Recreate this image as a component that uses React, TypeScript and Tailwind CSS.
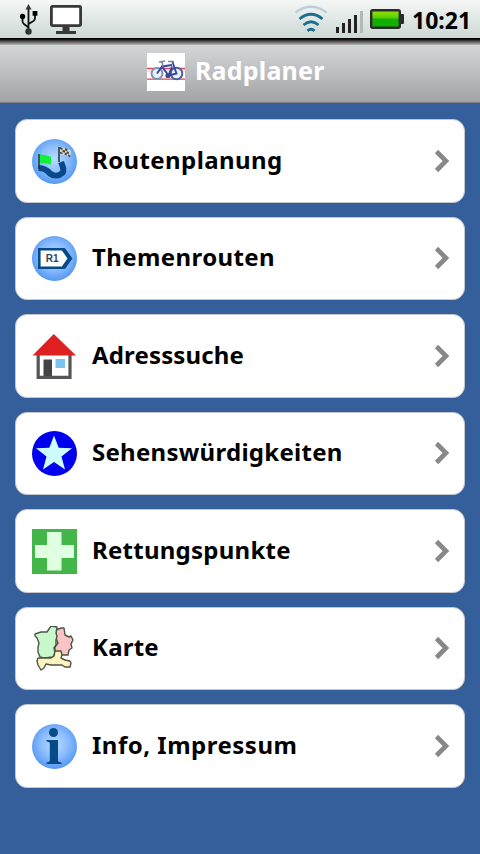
import React from "react";
import clsx from "clsx";

function UsbIcon() {
  return (
    <svg className="h-8 w-[18px]" viewBox="0 0 18 32" fill="none" stroke="#111" strokeWidth="1.800">
      <path d="M8.500 5v22M8.500 23.500L4 20Q2.500 19 2.500 17v-4M8.500 20l5-3Q15 16 15 14v-3" />
      <path d="M8.500 0L11.500 5.500h-6z" fill="#333" stroke="none" />
      <circle cx="2.500" cy="12.500" r="2.700" fill="#000" stroke="none" />
      <path d="M12.600 7h4.800v4.800h-4.800z" fill="#000" stroke="none" />
      <circle cx="8.500" cy="27.500" r="3.200" fill="#333" stroke="none" />
    </svg>
  );
}

function MonitorIcon() {
  return (
    <svg className="h-[30px] w-8" viewBox="0 0 32 30">
      <rect x="1.400" y="2.400" width="29.200" height="19.200" rx="1" fill="#fff" stroke="#383838" strokeWidth="2.800" />
      <path d="M12.500 22h7v5H26v3H6v-3h6.500z" fill="#383838" />
    </svg>
  );
}

function WifiIcon() {
  return (
    <svg className="h-[28px] w-[34px]" viewBox="0 0 34 28" fill="none" strokeWidth="2.700">
      <path d="M0.500 7.500Q16-4 31.500 7.500" stroke="#b9d0da" strokeWidth="2.400" />
      <path d="M4.500 14Q16 4.500 27.500 14" stroke="#1b6f91" />
      <path d="M8.500 20Q16 13.500 23.500 20" stroke="#1b6f91" />
      <path d="M12.500 25.800Q16 22.800 19.500 25.800" stroke="#1b6f91" strokeWidth="3" />
    </svg>
  );
}

function SignalIcon() {
  return (
    <svg className="h-[22px] w-[27px]" viewBox="0 0 27 22" fill="#222">
      <rect x="0" y="16" width="3" height="6" />
      <rect x="6" y="12" width="3" height="10" />
      <rect x="12" y="8" width="3" height="14" />
      <rect x="18" y="4" width="3" height="18" />
      <rect x="24" y="0" width="3" height="22" fill="#b4b9b8" />
    </svg>
  );
}

function BatteryIcon() {
  return (
    <svg className="h-5 w-[34px]" viewBox="0 0 34 20">
      <defs>
        <linearGradient id="charge" x1="0" y1="0" x2="0" y2="1">
          <stop offset="0" stopColor="#9be600" />
          <stop offset="0.450" stopColor="#55cc00" />
          <stop offset="0.500" stopColor="#0fb000" />
          <stop offset="1" stopColor="#10b400" />
        </linearGradient>
      </defs>
      <rect x="29" y="5" width="5" height="10" rx="1" fill="#2b2b2b" />
      <rect x="1.200" y="1.200" width="28.600" height="17.600" rx="1.500" fill="url(#charge)" stroke="#2b2b2b" strokeWidth="2.400" />
    </svg>
  );
}

function BikeLogo() {
  return (
    <svg className="h-[38px] w-[38px] bg-white" viewBox="0 0 38 38" fill="none">
      <path d="M0 15.500h38M0 26.200h38" stroke="#e2455a" strokeWidth="1.300" />
      <path d="M0 18h38" stroke="#f3b6c0" strokeWidth="0.800" />
      <circle cx="10" cy="20.500" r="5.500" fill="#e8f1f4" stroke="#8290b4" strokeWidth="2" />
      <circle cx="29.500" cy="20.500" r="5.800" fill="#e8f1f4" stroke="#4c5c9c" strokeWidth="2" />
      <path d="M10 20.500l5-7L21.500 22.500l3.500-9M15 13.500l10-1.500M21.500 22.500l8-2L25.500 9" stroke="#3548a0" strokeWidth="1.900" />
      <path d="M12 9l6-1M15 8.500l1 5M21 8.500h6" stroke="#7b8699" strokeWidth="1.600" />
      <circle cx="21" cy="22.500" r="2.600" fill="#3c4b94" />
    </svg>
  );
}

function Bubble() {
  return (
    <>
      <defs>
        <radialGradient id="bubble" cx="0.500" cy="0.450" r="0.550">
          <stop offset="0" stopColor="#b9dcff" />
          <stop offset="0.550" stopColor="#8abcff" />
          <stop offset="1" stopColor="#5598f2" />
        </radialGradient>
      </defs>
      <circle cx="22.500" cy="22.500" r="22.500" fill="url(#bubble)" />
    </>
  );
}

function RouteIcon() {
  return (
    <svg className="size-full" viewBox="0 0 45 45">
      <Bubble />
      <path
        d="M6.500 29C12 29 15 31 18 34.500C22 37.500 27 37 30.500 34C32.500 31 31 28 29 23"
        fill="none"
        stroke="#064b87"
        strokeWidth="6"
      />
      <path d="M7 15v15M27 8v15" stroke="#27313a" strokeWidth="1.500" />
      <path d="M8 15c4 1.500 6 .5 11 3v8c-4-2.500-7-.5-11-2.500z" fill="#10f238" />
      <path d="M28 8c4 1.500 6 0 11 4l-1 6.500c-4-3.500-6-2-10-3.500z" fill="#d5d8d2" />
      <path
        d="M28 8l2.500 1v2l-2.500-1zM33 9l2.500 1-.5 2-2-.5zM30.500 11l2.500.5v2l-2.500-.5zM35 12l2 1.500-.5 2-2-1.500zM28 13l2.500.5v1.500l-2.500-.5zM33 13.500l2 1-.5 2-2-1zM36.500 15.500l2 1-.5 2-2-1.500z"
        fill="#41443f"
      />
    </svg>
  );
}

function SignIcon() {
  return (
    <svg className="size-full" viewBox="0 0 45 45">
      <Bubble />
      <path d="M7.300 13.300h24.500l6.500 9.200-6.500 9.200H7.300z" fill="#fff" stroke="#064b87" strokeWidth="2.600" />
      <path d="M31.500 13.300l6.500 9.200-6.500 9.200" fill="none" stroke="#064b87" strokeWidth="4" />
      <text x="13.700" y="26.300" fontSize="10" fontWeight="700" fill="#2c4468" className="font-['Liberation_Sans',sans-serif]">
        R1
      </text>
    </svg>
  );
}

function HouseIcon() {
  return (
    <svg className="size-full" viewBox="0 0 45 45">
      <path d="M6.200 19h31.800v24.300H6.200z" fill="#fff" stroke="#555" strokeWidth="3.200" />
      <path d="M11.500 25.500h8.500V42h-8.500z" fill="#444" />
      <path d="M23.500 25h9.500v9h-9.500z" fill="#79c5ed" />
      <path d="M21.800 0L44 21.500H0.500z" fill="#df2020" />
    </svg>
  );
}

function StarIcon() {
  return (
    <svg className="size-full" viewBox="0 0 45 45">
      <circle cx="22.500" cy="22.500" r="22.500" fill="#0000ee" />
      <path d="M22 4.500l4.700 12.300 13.300.5-10.500 8.200L33 38.500l-11-7.600-11 7.600 3.500-13L4 17.300l13.300-.5z" fill="#ccfcff" />
    </svg>
  );
}

function CrossIcon() {
  return (
    <svg className="size-full" viewBox="0 0 45 45">
      <path d="M0 0h45v45H0z" fill="#43b649" />
      <path d="M15 3h14.500v13H42v13H29.500v12.500H15V29H3V16h12z" fill="#dfffe0" />
    </svg>
  );
}

function MapIcon() {
  return (
    <svg className="size-full" viewBox="0 0 45 45" stroke="#4b5548" strokeWidth="1.400" strokeLinejoin="round">
      <path d="M24 4l5-2 3 0 1 7 4 2 2-1 2 4-2 4 1 4-3 2-1 5-6 0-3-3-4 0 0-5 3-4-2-5z" fill="#fac3c4" />
      <path
        d="M3 8l6-2 6 0 4-6 6 1-1 6 1 3-1 4 0 5-2 3 1 5-2 4-9 1-4-1-2-5 0-5 1-4-2-5-2-2z"
        fill="#c9f9cb"
      />
      <path
        d="M8 32l11 0 3-2 1-5 6 0 1 4-1 3 4 2 5 1 1 2-1 4-5 0-3-2-11 0-5-1-2 4-3 2-3-5-1-4 1-3z"
        fill="#fdf4bd"
      />
    </svg>
  );
}

function InfoIcon() {
  return (
    <svg className="size-full" viewBox="0 0 45 45" fill="#064b87">
      <Bubble />
      <circle cx="21.500" cy="8.500" r="4.500" />
      <path d="M14.500 16H26v20.500q0 1.500 3.500 2V40h-15v-1.500q3.300-.5 3.300-2V19.500q0-1.500-3.300-2z" />
    </svg>
  );
}

const menu = [
  { title: "Routenplanung", icon: RouteIcon, tracking: "tracking-[0.400px]" },
  { title: "Themenrouten", icon: SignIcon, tracking: "tracking-[0.400px]" },
  { title: "Adresssuche", icon: HouseIcon, tracking: "tracking-[0.150px]" },
  { title: "Sehenswürdigkeiten", icon: StarIcon, tracking: "tracking-[0.270px]" },
  { title: "Rettungspunkte", icon: CrossIcon, tracking: "tracking-[0.250px]" },
  { title: "Karte", icon: MapIcon, tracking: "tracking-[0.200px]" },
  { title: "Info, Impressum", icon: InfoIcon, tracking: "tracking-[0.500px]" },
];

function StatusBar() {
  return (
    <div className="flex h-[38px] items-start bg-linear-to-b from-[#f5f7f6] to-[#ccd8d4] pl-[20px] pr-[9px]">
      <div className="flex gap-3 pt-[4px]">
        <UsbIcon />
        <MonitorIcon />
      </div>
      <div className="ml-auto flex items-start">
        <div className="pt-[5px]">
          <WifiIcon />
        </div>
        <div className="pl-[7px] pt-[11px]">
          <SignalIcon />
        </div>
        <div className="pl-[7px] pt-[9px]">
          <BatteryIcon />
        </div>
        <span className="w-[67px] pl-[8px] pt-[4px] text-[23px] font-bold leading-8 text-black whitespace-nowrap">
          10:21
        </span>
      </div>
    </div>
  );
}

function TitleBar() {
  return (
    <header className="h-[65px] border-b border-[#7b7f85] bg-linear-to-b from-[#dcddde] to-[#a2a3a5]">
      <div className="h-[7px] bg-linear-to-b from-black via-[#555] to-[#b9bbbb]" />
      <div className="flex items-start pl-[147px] pt-[8px]">
        <BikeLogo />
        <h1 className="-mt-px pl-[10px] text-[25px] font-bold leading-9 tracking-[0.200px] text-white">Radplaner</h1>
      </div>
    </header>
  );
}

type MenuItemProps = {
  title: string;
  icon: () => React.ReactElement;
  tracking: string;
};

function MenuItem({ title, icon: Icon, tracking }: MenuItemProps) {
  return (
    <li className="flex h-[83.4px] items-center rounded-[12px] border border-[#c3c7cc] bg-white pl-[16px] pr-[14px] pt-[1px]">
      <div className="mb-[0.600px] size-[45px] shrink-0">
        <Icon />
      </div>
      <span className={clsx("pb-[3.8px] pl-[15px] text-[24px] font-bold leading-8 text-black", tracking)}>{title}</span>
      <svg className="mb-[1.8px] ml-auto h-6 w-4" viewBox="0 0 16 24" fill="none" stroke="#888" strokeWidth="4.600">
        <path d="M2.500 2.500L12 12l-9.500 9.500" />
      </svg>
    </li>
  );
}

export default function App() {
  return (
    <div className="h-[854px] w-[480px] overflow-hidden bg-[#355f9b] font-['Noto_Sans',sans-serif]">
      <StatusBar />
      <TitleBar />
      <ul className="flex flex-col gap-[14.1px] px-[15px] pt-[16.4px]">
        {menu.map((item) => (
          <MenuItem key={item.title} {...item} />
        ))}
      </ul>
    </div>
  );
}
